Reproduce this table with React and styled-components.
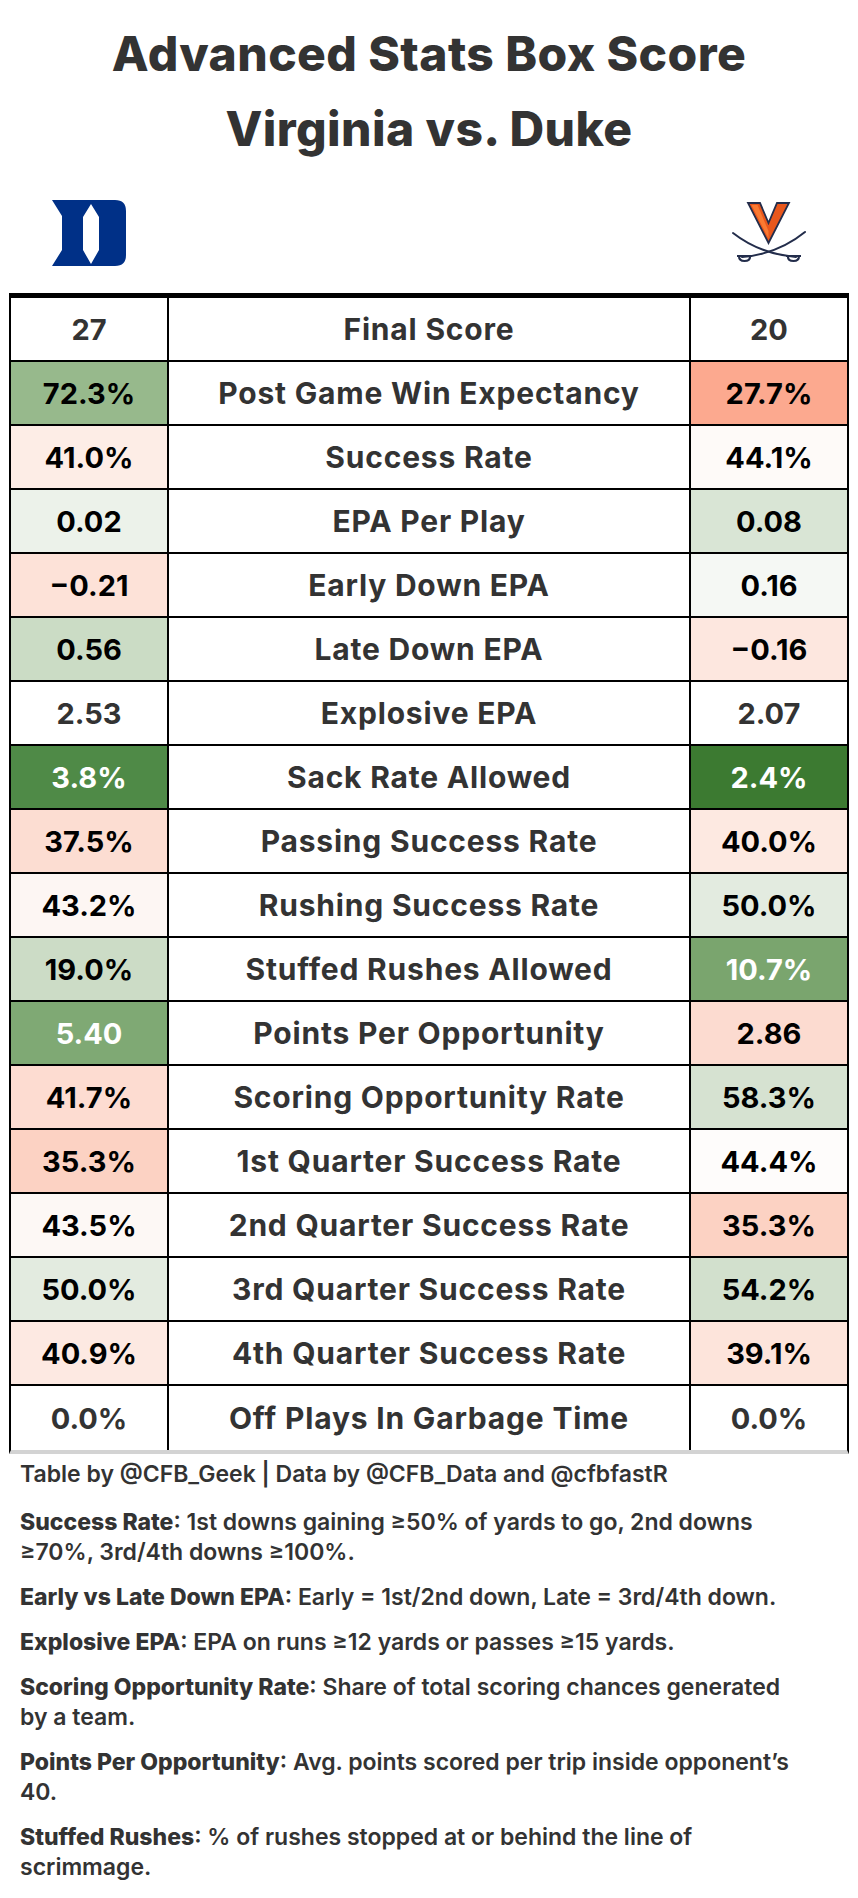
import React from "react";
import styled, { createGlobalStyle } from "styled-components";

const GlobalStyle = createGlobalStyle`
  body {
    margin: 0;
    background: #ffffff;
    font-family: Inter, Roboto, "Liberation Sans", sans-serif;
  }
`;

const rows = [
  { l: "27", label: "Final Score", r: "20" },
  { l: "72.3%", lb: "#97b98c", label: "Post Game Win Expectancy", r: "27.7%", rb: "#fca98f" },
  { l: "41.0%", lb: "#fdede6", label: "Success Rate", r: "44.1%", rb: "#fefaf8" },
  { l: "0.02", lb: "#ecf2ea", label: "EPA Per Play", r: "0.08", rb: "#d9e5d5" },
  { l: "\u22120.21", lb: "#fde2d8", label: "Early Down EPA", r: "0.16", rb: "#f5f8f4" },
  { l: "0.56", lb: "#cbdcc5", label: "Late Down EPA", r: "\u22120.16", rb: "#fde7df" },
  { l: "2.53", label: "Explosive EPA", r: "2.07" },
  { l: "3.8%", lb: "#4f8a47", lw: true, label: "Sack Rate Allowed", r: "2.4%", rb: "#3c7a31", rw: true },
  { l: "37.5%", lb: "#fcddd2", label: "Passing Success Rate", r: "40.0%", rb: "#fde9e1" },
  { l: "43.2%", lb: "#fdf6f3", label: "Rushing Success Rate", r: "50.0%", rb: "#e3ebe0" },
  { l: "19.0%", lb: "#ccdcc6", label: "Stuffed Rushes Allowed", r: "10.7%", rb: "#7aa56e", rw: true },
  { l: "5.40", lb: "#7fa974", lw: true, label: "Points Per Opportunity", r: "2.86", rb: "#fcdbd0" },
  { l: "41.7%", lb: "#fddcd1", label: "Scoring Opportunity Rate", r: "58.3%", rb: "#d6e2d1" },
  { l: "35.3%", lb: "#fcd2c3", label: "1st Quarter Success Rate", r: "44.4%", rb: "#fefcfb" },
  { l: "43.5%", lb: "#fdf8f5", label: "2nd Quarter Success Rate", r: "35.3%", rb: "#fcd2c3" },
  { l: "50.0%", lb: "#e3ebe0", label: "3rd Quarter Success Rate", r: "54.2%", rb: "#d2e0cd" },
  { l: "40.9%", lb: "#fde9e2", label: "4th Quarter Success Rate", r: "39.1%", rb: "#fde4db" },
  { l: "0.0%", label: "Off Plays In Garbage Time", r: "0.0%" },
];

const notes = [
  {
    term: "Success Rate",
    text: "1st downs gaining \u226550% of yards to go, 2nd downs \u226570%, 3rd/4th downs \u2265100%.",
  },
  { term: "Early vs Late Down EPA", text: "Early = 1st/2nd down, Late = 3rd/4th down." },
  { term: "Explosive EPA", text: "EPA on runs \u226512 yards or passes \u226515 yards." },
  { term: "Scoring Opportunity Rate", text: "Share of total scoring chances generated by a team." },
  { term: "Points Per Opportunity", text: "Avg. points scored per trip inside opponent\u2019s 40." },
  { term: "Stuffed Rushes", text: "% of rushes stopped at or behind the line of scrimmage." },
];

function DukeLogo() {
  return (
    <svg width="74" height="66" viewBox="0 0 74 66">
      <path
        fillRule="evenodd"
        fill="#003087"
        d="M0,0 H63 Q74,0 74,11 V55 Q74,66 63,66 H0 L10,50 V16 Z M39,4 L47,17 V50 L39,64 L31,50 V17 Z"
      />
    </svg>
  );
}

function VirginiaLogo() {
  return (
    <svg width="74" height="66" viewBox="0 0 74 66">
      <path
        d="M16,3 H28 L36.5,23 L45,3 H57 L36.5,43 Z"
        fill="#e8571c"
        stroke="#232d4b"
        strokeWidth="1.8"
        strokeLinejoin="miter"
      />
      <path d="M19.5,5 H25.5 L36.5,31 V38.5 Z" fill="#fa7a32" />
      <path d="M1,33 Q28,54 64,57" fill="none" stroke="#232d4b" strokeWidth="2" strokeLinecap="round" />
      <path d="M73,32 Q46,54 10,57" fill="none" stroke="#232d4b" strokeWidth="2" strokeLinecap="round" />
      <path d="M5,56 H20 M7,56 Q7,61 12.5,61 Q18,61 18,57" fill="none" stroke="#232d4b" strokeWidth="2.2" />
      <path d="M54,56 H69 M56,57 Q56,61 61.5,61 Q67,61 67,56" fill="none" stroke="#232d4b" strokeWidth="2.2" />
    </svg>
  );
}

export default function App() {
  return (
    <Page>
      <GlobalStyle />
      <Title>
        Advanced Stats Box Score
        <br />
        Virginia vs. Duke
      </Title>
      <LogoRow>
        <LogoCell>
          <DukeLogo />
        </LogoCell>
        <span />
        <LogoCell>
          <VirginiaLogo />
        </LogoCell>
      </LogoRow>
      <Table>
        {rows.map((row, i) => (
          <Row key={row.label} $last={i === rows.length - 1}>
            <Value $bg={row.lb} $light={row.lw}>
              {row.l}
            </Value>
            <Label>{row.label}</Label>
            <Value $bg={row.rb} $light={row.rw} $end>
              {row.r}
            </Value>
          </Row>
        ))}
      </Table>
      <Footer>
        <Credit>Table by @CFB_Geek | Data by @CFB_Data and @cfbfastR</Credit>
        {notes.map((n) => (
          <Note key={n.term}>
            <Term>{n.term}</Term>: {n.text}
          </Note>
        ))}
      </Footer>
    </Page>
  );
}

const Page = styled.div`
  width: 858px;
  padding-top: 16px;
  padding-bottom: 20px;
  color: #333333;
`;

const Title = styled.h1`
  margin: 0;
  text-align: center;
  font-family: Inter, Roboto, "Liberation Sans", sans-serif;
  font-size: 48px;
  font-weight: 800;
  letter-spacing: 0.4px;
  line-height: 75px;
  color: #333333;
`;

const LogoRow = styled.div`
  display: grid;
  grid-template-columns: 160px 520px 160px;
  height: 80px;
  margin: 27px 0 0 9px;
  align-items: center;
`;

const LogoCell = styled.div`
  display: flex;
  justify-content: center;
  align-items: center;
`;

const Table = styled.div`
  width: 840px;
  margin: 20px 0 0 9px;
  box-sizing: border-box;
  border-top: 5px solid #000000;
  border-left: 2px solid #000000;
  border-right: 2px solid #000000;
  border-bottom: 4px solid #d3d3d3;
`;

const Row = styled.div`
  display: grid;
  grid-template-columns: 158px 520px 158px;
  height: 64px;
  box-sizing: border-box;
  border-bottom: ${(p) => (p.$last ? "none" : "2px solid #000000")};
`;

const Value = styled.div`
  display: flex;
  align-items: center;
  justify-content: center;
  background: ${(p) => p.$bg || "#ffffff"};
  color: ${(p) => (p.$light ? "#ffffff" : p.$bg ? "#000000" : "#333333")};
  border-left: ${(p) => (p.$end ? "2px solid #000000" : "none")};
  border-right: ${(p) => (p.$end ? "none" : "2px solid #000000")};
  font-size: 29px;
  font-weight: 700;
`;

const Label = styled.div`
  display: flex;
  align-items: center;
  justify-content: center;
  font-size: 30px;
  font-weight: 700;
  letter-spacing: 0.8px;
  color: #333333;
`;

const Footer = styled.div`
  width: 791px;
  margin-left: 9px;
  padding: 5px 0 0 11px;
  box-sizing: border-box;
  font-size: 23px;
  font-weight: 600;
  line-height: 30px;
  color: #333333;
`;

const Credit = styled.div`
  margin-bottom: 18px;
`;

const Note = styled.p`
  margin: 0 0 15px;
`;

const Term = styled.span`
  font-weight: 800;
`;
